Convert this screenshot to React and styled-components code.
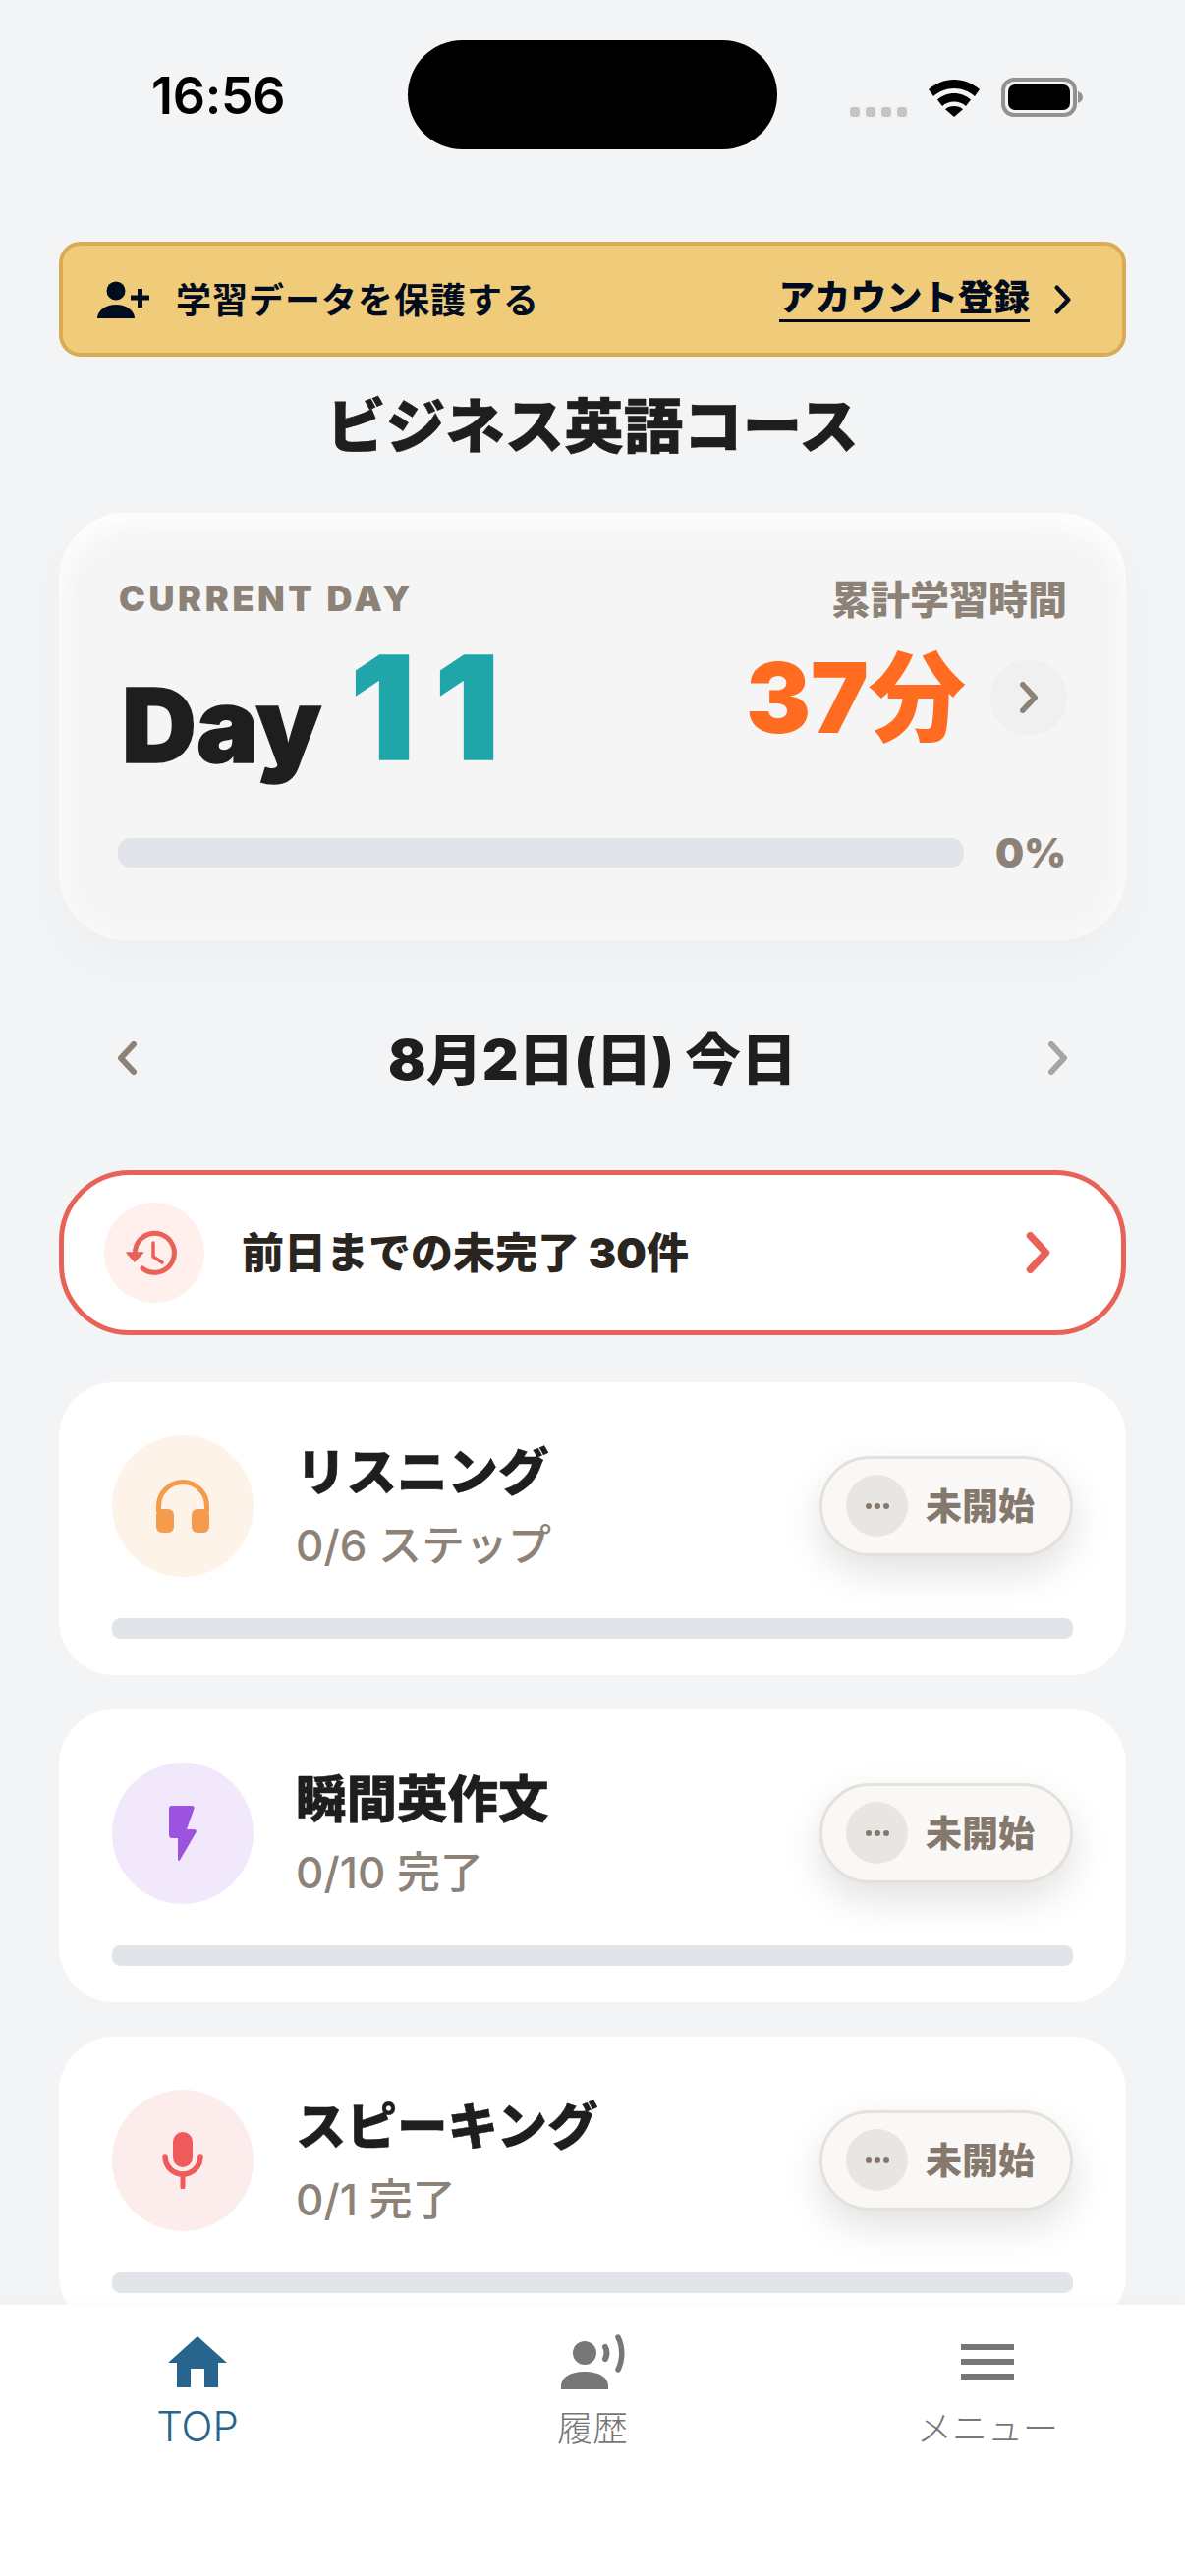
import React from 'react';
import styled, {createGlobalStyle} from 'styled-components';

const GlobalStyle = createGlobalStyle`
  html, body {
    margin: 0;
    padding: 0;
    background: #f2f4f6;
  }
  * {
    box-sizing: border-box;
  }
`;

const FONT = `Inter, "Noto Sans CJK JP", sans-serif`;

const Screen = styled.div`
  position: relative;
  width: 1206px;
  height: 2622px;
  overflow: hidden;
  background: #f2f4f6;
  font-family: ${FONT};
  color: #1e1e1e;
`;

const StatusBar = styled.div`
  display: grid;
  grid-template-columns: 415px 376px 1fr;
  padding-top: 41px;
  height: 152px;
`;

const Clock = styled.div`
  padding-left: 154px;
  padding-top: 28px;
  font-size: 52px;
  line-height: 58px;
  font-weight: 600;
  color: #000;
  letter-spacing: -0.3px;
`;

const Island = styled.div`
  height: 111px;
  border-radius: 56px;
  background: #000;
`;

const StatusIcons = styled.div`
  display: flex;
  align-items: flex-end;
  padding: 38px 0 36px 74px;
`;

const SignalDots = styled.div`
  display: flex;
  gap: 6px;
  margin-right: 22px;
`;

const SignalDot = styled.span`
  width: 10px;
  height: 10px;
  border-radius: 3px;
  background: #c4c4c4;
`;

const StatusGap = styled.span`
  width: 22px;
`;

const Content = styled.main`
  padding: 0 60px;
`;

const Banner = styled.div`
  display: flex;
  align-items: center;
  height: 117px;
  margin-top: 94px;
  padding: 0 52px 0 33px;
  border: 4px solid #d9ab55;
  border-radius: 22px;
  background: #f0cb79;
  color: #020c20;
`;

const BannerText = styled.span`
  margin-left: 26px;
  padding-bottom: 4px;
  font-size: 36px;
  font-weight: 600;
  letter-spacing: 1px;
`;

const BannerLink = styled.span`
  margin-left: auto;
  margin-right: 25px;
  font-size: 36.5px;
  font-weight: 900;
  border-bottom: 3px solid #020c20;
  line-height: 44px;
`;

const Title = styled.h1`
  margin: 35px 0 0;
  text-align: center;
  font-size: 60.5px;
  line-height: 72px;
  font-weight: 900;
  color: #1e1e1e;
  -webkit-text-stroke: 0.6px #1e1e1e;
`;

const Hero = styled.section`
  margin-top: 52px;
  height: 435px;
  padding: 65px 60px 0;
  border-radius: 68px;
  background: #f5f5f5;
  box-shadow: inset 0 22px 36px -10px rgba(255, 255, 255, 0.9),
    inset 0 0 36px rgba(255, 255, 255, 0.55), 0 22px 50px rgba(0, 0, 0, 0.025);
`;

const HeroLabels = styled.div`
  display: flex;
  justify-content: space-between;
  align-items: center;
  height: 46px;
  color: #8c8277;
`;

const CurrentDay = styled.span`
  padding: 0 0 2px 1px;
  font-size: 36px;
  font-weight: 900;
  letter-spacing: 3.6px;
`;

const TotalLabel = styled.span`
  padding-bottom: 4px;
  font-size: 40px;
  font-weight: 900;
`;

const HeroMain = styled.div`
  display: flex;
  justify-content: space-between;
  align-items: flex-start;
  height: 220px;
`;

const DayValue = styled.div`
  display: flex;
  align-items: baseline;
  height: 140px;
  margin-top: 25px;
  line-height: 160px;
  padding-left: 4px;
`;

const DayWord = styled.span`
  font-size: 105px;
  font-weight: 900;
  color: #1e1e1e;
  -webkit-text-stroke: 1.5px #1e1e1e;
`;

const DayNumber = styled.span`
  position: relative;
  top: -3px;
  margin-left: 29px;
  font-size: 146px;
  font-weight: 900;
  letter-spacing: 20px;
  line-height: 100px;
  color: #20a6a8;
  -webkit-text-stroke: 1.5px #20a6a8;
`;

const TotalRow = styled.div`
  display: flex;
  align-items: center;
  gap: 25px;
  margin-top: 22px;
`;

const TotalValue = styled.span`
  font-size: 99px;
  line-height: 110px;
  font-weight: 900;
  color: #ff6b21;
`;

const RoundButton = styled.span`
  display: flex;
  align-items: center;
  justify-content: center;
  width: 78px;
  height: 78px;
  border-radius: 50%;
  background: #f0f0f0;
`;

const HeroProgress = styled.div`
  display: flex;
  align-items: center;
  gap: 32px;
`;

const Bar = styled.div`
  flex: 1;
  height: ${({$height}) => $height}px;
  border-radius: ${({$height}) => $height / 2 - 2}px;
  background: #e1e4e9;
`;

const Percent = styled.span`
  width: 73px;
  font-size: 41px;
  font-weight: 900;
  line-height: 30px;
  color: #8c8277;
  white-space: nowrap;
`;

const DateRow = styled.div`
  display: flex;
  align-items: center;
  justify-content: space-between;
  height: 80px;
  margin-top: 80px;
  padding: 0 60px;
`;

const DateLabel = styled.span`
  padding-bottom: 6px;
  font-size: 57px;
  font-weight: 900;
  color: #1e1e1e;
`;

const Overdue = styled.div`
  display: flex;
  align-items: center;
  height: 168px;
  margin-top: 74px;
  padding: 0 72px 0 41px;
  border: 5px solid #e86257;
  border-radius: 72px;
  background: #fff;
`;

const OverdueIcon = styled.span`
  display: flex;
  align-items: center;
  justify-content: center;
  width: 102px;
  height: 102px;
  border-radius: 50%;
  background: #ffefed;
`;

const OverdueText = styled.span`
  margin-left: 38px;
  padding-bottom: 6px;
  font-size: 43px;
  font-weight: 900;
  color: #2b251f;
`;

const OverdueArrow = styled.span`
  display: flex;
  margin-left: auto;
`;

const TaskList = styled.div`
  display: flex;
  flex-direction: column;
  gap: 35px;
  margin-top: 48px;
`;

const TaskCard = styled.article`
  height: 298px;
  padding: 53px 54px 36px;
  border-radius: 56px;
  background: #fff;
`;

const TaskHead = styled.div`
  display: flex;
  align-items: center;
  height: 145px;
  margin-bottom: 42px;
`;

const TaskIcon = styled.span`
  display: flex;
  align-items: center;
  justify-content: center;
  width: 144px;
  height: 144px;
  border-radius: 50%;
  background: ${({$bg}) => $bg};
`;

const TaskBody = styled.div`
  flex: 1;
  margin-left: 43px;
`;

const TaskTitle = styled.div`
  margin-top: -5px;
  font-size: 51.5px;
  line-height: 72px;
  font-weight: 900;
  color: #1e1e1e;
  -webkit-text-stroke: 0.5px #1e1e1e;
`;

const TaskSub = styled.div`
  margin-top: 13px;
  font-size: 44px;
  line-height: 52px;
  font-weight: 500;
  color: #8c8277;
`;

const StatusPill = styled.div`
  display: flex;
  align-items: center;
  width: 258px;
  height: 102px;
  padding-left: 24px;
  border: 3px solid #e5e0da;
  border-radius: 51px;
  background: #f9f8f6;
  box-shadow: 0 16px 40px rgba(0, 0, 0, 0.12);
`;

const PillDots = styled.span`
  display: flex;
  align-items: center;
  justify-content: center;
  gap: 3px;
  width: 63px;
  height: 63px;
  border-radius: 50%;
  background: #e8e6e3;
`;

const PillDot = styled.i`
  width: 6px;
  height: 6px;
  border-radius: 50%;
  background: #85796e;
`;

const PillText = styled.span`
  margin-left: 18px;
  padding-bottom: 4px;
  font-size: 37px;
  font-weight: 800;
  color: #85796e;
`;

const BottomNav = styled.nav`
  position: absolute;
  left: 0;
  right: 0;
  bottom: 0;
  display: grid;
  grid-template-columns: repeat(3, 1fr);
  height: 276px;
  background: #fff;
  box-shadow: 0 -3px 14px rgba(0, 0, 0, 0.02);
`;

const NavItem = styled.div`
  display: flex;
  flex-direction: column;
  align-items: center;
  padding-top: 28px;
  color: ${({$active}) => ($active ? '#27658e' : '#777')};
`;

const NavIconBox = styled.span`
  display: flex;
  align-items: center;
  justify-content: center;
  height: 60px;
`;

const NavLabel = styled.span`
  margin-top: ${({$active}) => ($active ? 12 : 14)}px;
  font-size: ${({$active}) => ($active ? 42 : 36)}px;
  line-height: 48px;
  font-weight: 300;
`;

const Chevron = ({dir = 'right', color, width = 19, height = 34, stroke = 6}) => (
  <svg width={width} height={height} viewBox="0 0 19 34" fill="none">
    <path
      d={dir === 'right' ? 'M3 3l13 14L3 31' : 'M16 3L3 17l13 14'}
      stroke={color}
      strokeWidth={stroke}
      strokeLinecap="round"
      strokeLinejoin="round"
    />
  </svg>
);

const WifiIcon = () => (
  <svg width="52" height="38" viewBox="0 0 52 38" fill="#000">
    <path d="M26 0c10 0 19 4 26 10l-5 7c-5.500-5-13-8-21-8S10.500 12 5 17l-5-7C7 4 16 0 26 0z" />
    <path d="M26 14c6.500 0 12.500 2.500 17 6.500l-5 6.500c-3-3-7.500-4.500-12-4.500s-9 1.500-12 4.500l-5-6.500c4.500-4 10.500-6.500 17-6.500z" />
    <path d="M26 27c3.500 0 6.500 1 9 3.200L26 38l-9-7.800C19.500 28 22.500 27 26 27z" />
  </svg>
);

const BatteryIcon = () => (
  <svg width="84" height="40" viewBox="0 0 84 40">
    <rect x="2" y="2" width="73" height="36" rx="11" fill="none" stroke="#929292" strokeWidth="4" />
    <rect x="7" y="7" width="63" height="26" rx="7" fill="#000" />
    <path d="M78 14c3 1 5 3 5 6s-2 5-5 6z" fill="#929292" />
  </svg>
);

const PersonPlusIcon = () => (
  <svg width="56" height="40" viewBox="0 0 56 40" fill="#020c20">
    <circle cx="21" cy="11" r="9.500" />
    <path d="M2 39c0-8 9-14 19-14s19 6 19 14c0 0-38 0-38 0z" />
    <path d="M36 18h19M45.500 9v19" stroke="#020c20" strokeWidth="5" />
  </svg>
);

const HistoryIcon = () => (
  <svg width="60" height="60" viewBox="0 0 60 60" fill="none">
    <path
      d="M10.500 28A20 20 0 1 1 18 46"
      stroke="#e86257"
      strokeWidth="5"
      strokeLinecap="round"
    />
    <path d="M2 30h16.500L10 39z" fill="#e86257" stroke="#e86257" strokeWidth="1.500" strokeLinejoin="round" />
    <path
      d="M29 20v14l9 6"
      stroke="#e86257"
      strokeWidth="3.500"
      strokeLinecap="round"
      strokeLinejoin="round"
    />
  </svg>
);

const HeadphonesIcon = () => (
  <svg width="54" height="54" viewBox="0 0 54 54" fill="#f59c4c">
    <path d="M2.500 33V27a24.500 24.500 0 0 1 49 0v6" fill="none" stroke="#f59c4c" strokeWidth="5" />
    <rect x="0" y="30" width="18" height="24" rx="6" />
    <rect x="36" y="30" width="18" height="24" rx="6" />
  </svg>
);

const ZapIcon = () => (
  <svg width="28" height="56" viewBox="0 0 28 56" fill="#9b53e0">
    <path d="M3 0h20c2.500 0 3 1.500 2.300 3.500L18 24h7c2.500 0 3.500 1.500 2.300 3.500L11.500 54.500C10 57 9 56 9 54V33H3c-2 0-3-1-3-3V3c0-2 1-3 3-3z" />
  </svg>
);

const MicIcon = () => (
  <svg width="42" height="58" viewBox="0 0 42 58" fill="none">
    <rect x="11" y="0" width="20" height="36" rx="10" fill="#ef5a5a" />
    <path d="M3 25c0 10 8 18 18 18s18-8 18-18" stroke="#ef5a5a" strokeWidth="5.500" strokeLinecap="round" />
    <path d="M21 43v13" stroke="#ef5a5a" strokeWidth="5" strokeLinecap="round" />
  </svg>
);

const HomeIcon = () => (
  <svg width="60" height="52" viewBox="0 0 60 52" fill="#27658e">
    <path d="M30 0l30 27h-9v25H37V33H23v19H9V27H0z" />
  </svg>
);

const VoiceIcon = () => (
  <svg width="68" height="56" viewBox="0 0 68 56" fill="#777">
    <circle cx="26" cy="19" r="12" />
    <path d="M2 56v-3c0-10 11-15 24-15s24 5 24 15v3z" />
    <path d="M47 13c2 4 2 8 0 12" fill="none" stroke="#777" strokeWidth="6" strokeLinecap="round" />
    <path d="M60 3c5 10 5 23 0 33" fill="none" stroke="#777" strokeWidth="5.500" strokeLinecap="round" />
  </svg>
);

const MenuIcon = () => (
  <svg width="54" height="37" viewBox="0 0 54 37" fill="#777">
    <rect y="0" width="54" height="6" />
    <rect y="15" width="54" height="6" />
    <rect y="30" width="54" height="6" />
  </svg>
);

const TASKS = [
  {title: 'リスニング', sub: '0/6 ステップ', bg: '#fef3e8', icon: <HeadphonesIcon />},
  {title: '瞬間英作文', sub: '0/10 完了', bg: '#f2e8fc', icon: <ZapIcon />},
  {title: 'スピーキング', sub: '0/1 完了', bg: '#fdecec', icon: <MicIcon />},
];

const NAV_ITEMS = [
  {label: 'TOP', icon: <HomeIcon />, active: true},
  {label: '履歴', icon: <VoiceIcon />},
  {label: 'メニュー', icon: <MenuIcon />},
];

export default function App() {
  return (
    <Screen>
      <GlobalStyle />
      <StatusBar>
        <Clock>16:56</Clock>
        <Island />
        <StatusIcons>
          <SignalDots>
            {[0, 1, 2, 3].map((i) => (
              <SignalDot key={i} />
            ))}
          </SignalDots>
          <WifiIcon />
          <StatusGap />
          <BatteryIcon />
        </StatusIcons>
      </StatusBar>

      <Content>
        <Banner>
          <PersonPlusIcon />
          <BannerText>学習データを保護する</BannerText>
          <BannerLink>アカウント登録</BannerLink>
          <Chevron color="#020c20" width={17} height={30} stroke={5} />
        </Banner>

        <Title>ビジネス英語コース</Title>

        <Hero>
          <HeroLabels>
            <CurrentDay>CURRENT DAY</CurrentDay>
            <TotalLabel>累計学習時間</TotalLabel>
          </HeroLabels>
          <HeroMain>
            <DayValue>
              <DayWord>Day</DayWord>
              <DayNumber>11</DayNumber>
            </DayValue>
            <TotalRow>
              <TotalValue>37分</TotalValue>
              <RoundButton>
                <Chevron color="#8c8277" width={18} height={32} />
              </RoundButton>
            </TotalRow>
          </HeroMain>
          <HeroProgress>
            <Bar $height={30} />
            <Percent>0%</Percent>
          </HeroProgress>
        </Hero>

        <DateRow>
          <Chevron dir="left" color="#8c8277" />
          <DateLabel>8月2日(日) 今日</DateLabel>
          <Chevron color="#a5a5a5" />
        </DateRow>

        <Overdue>
          <OverdueIcon>
            <HistoryIcon />
          </OverdueIcon>
          <OverdueText>前日までの未完了 30件</OverdueText>
          <OverdueArrow>
            <Chevron color="#e86257" width={25} height={42} />
          </OverdueArrow>
        </Overdue>

        <TaskList>
          {TASKS.map((task) => (
            <TaskCard key={task.title}>
              <TaskHead>
                <TaskIcon $bg={task.bg}>{task.icon}</TaskIcon>
                <TaskBody>
                  <TaskTitle>{task.title}</TaskTitle>
                  <TaskSub>{task.sub}</TaskSub>
                </TaskBody>
                <StatusPill>
                  <PillDots>
                    <PillDot />
                    <PillDot />
                    <PillDot />
                  </PillDots>
                  <PillText>未開始</PillText>
                </StatusPill>
              </TaskHead>
              <Bar $height={21} />
            </TaskCard>
          ))}
        </TaskList>
      </Content>

      <BottomNav>
        {NAV_ITEMS.map((item) => (
          <NavItem key={item.label} $active={item.active}>
            <NavIconBox>{item.icon}</NavIconBox>
            <NavLabel $active={item.active}>{item.label}</NavLabel>
          </NavItem>
        ))}
      </BottomNav>
    </Screen>
  );
}
